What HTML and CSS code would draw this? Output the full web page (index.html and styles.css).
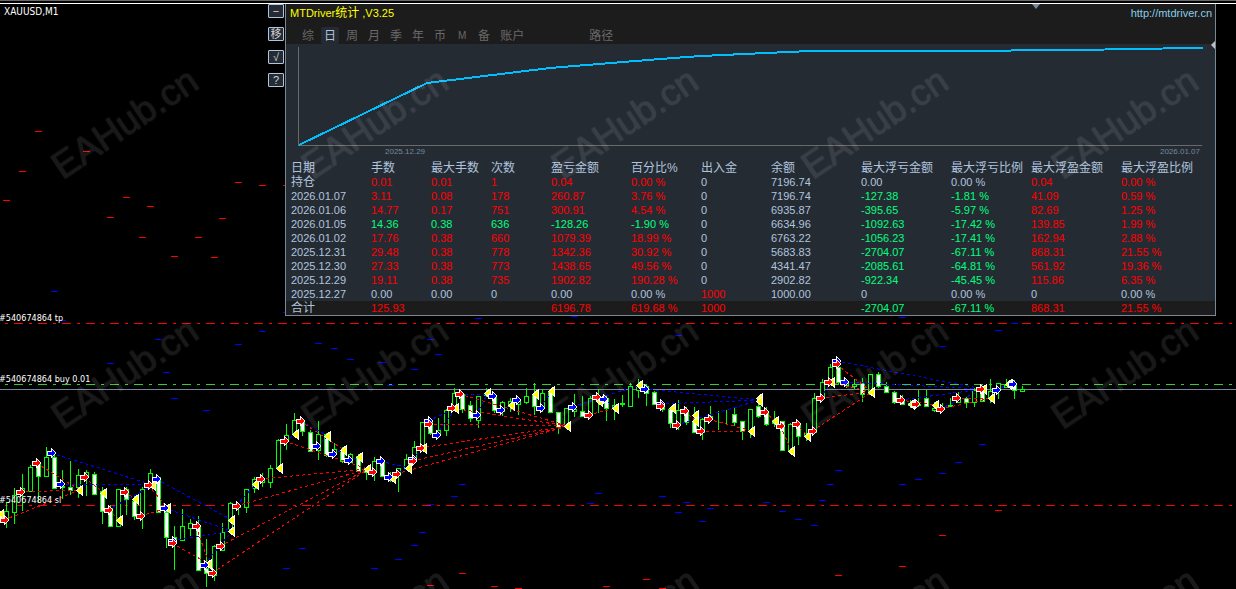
FILE: index.html
```html
<!DOCTYPE html>
<html lang="zh">
<head>
<meta charset="UTF-8">
<meta name="viewport" content="width=device-width, initial-scale=1.0">
<title>XAUUSD,M1</title>
<link rel="stylesheet" href="styles.css">
</head>
<body>

<!-- K线图 -->
<svg id="price-chart" class="price-chart"></svg>

<div class="top-line"></div>

<div class="terminal">
  <div class="side">
    <span class="symbol">XAUUSD,M1</span>
    <div class="tools">
      <button>−</button>
      <button>移</button>
      <button>√</button>
      <button>?</button>
    </div>
  </div>

  <div class="panel">
    <div class="panel-header">
      <div class="title-row">
        <span class="title">MTDriver<span class="cn">统计</span> ,V3.25</span>
        <a href="#">http://mtdriver.cn</a>
      </div>
      <nav class="tabs">
        <button>综</button>
        <button class="active">日</button>
        <button>周</button>
        <button>月</button>
        <button>季</button>
        <button>年</button>
        <button>币</button>
        <button class="latin">M</button>
        <button>备</button>
        <button>账户</button>
        <button class="path">路径</button>
      </nav>
    </div>

    <!-- 资金曲线 -->
    <figure class="equity">
      <svg viewBox="0 0 929 103" preserveAspectRatio="none">
        <path class="axis" d="M12.5 3V101.500H916"/>
        <polyline class="curve" points="13,101 141,39 264,24 374,15 415,12 524,7 650,7 800,6 838,5 917,4"/>
      </svg>
      <figcaption><span>2025.12.29</span><span>2026.01.07</span></figcaption>
    </figure>

    <table class="stats">
      <thead>
        <tr><th class="w-date">日期</th><th class="w-s">手数</th><th class="w-s">最大手数</th><th class="w-s">次数</th><th class="w-l">盈亏金额</th><th class="w-m">百分比%</th><th class="w-m">出入金</th><th class="w-xl">余额</th><th class="w-xl">最大浮亏金额</th><th class="w-l">最大浮亏比例</th><th class="w-xl">最大浮盈金额</th><th>最大浮盈比例</th></tr>
      </thead>
      <tbody>
        <tr><td class="cn">持仓</td><td class="up">0.01</td><td class="up">0.01</td><td class="up">1</td><td class="up">0.04</td><td class="up">0.00 %</td><td>0</td><td>7196.74</td><td>0.00</td><td>0.00 %</td><td class="up">0.04</td><td class="up">0.00 %</td></tr>
        <tr><td>2026.01.07</td><td class="up">3.11</td><td class="up">0.08</td><td class="up">178</td><td class="up">260.87</td><td class="up">3.76 %</td><td>0</td><td>7196.74</td><td class="down">-127.38</td><td class="down">-1.81 %</td><td class="up">41.09</td><td class="up">0.59 %</td></tr>
        <tr><td>2026.01.06</td><td class="up">14.77</td><td class="up">0.17</td><td class="up">751</td><td class="up">300.91</td><td class="up">4.54 %</td><td>0</td><td>6935.87</td><td class="down">-395.65</td><td class="down">-5.97 %</td><td class="up">82.69</td><td class="up">1.25 %</td></tr>
        <tr><td>2026.01.05</td><td class="down">14.36</td><td class="down">0.38</td><td class="down">636</td><td class="down">-128.26</td><td class="down">-1.90 %</td><td>0</td><td>6634.96</td><td class="down">-1092.63</td><td class="down">-17.42 %</td><td class="up">139.85</td><td class="up">1.99 %</td></tr>
        <tr><td>2026.01.02</td><td class="up">17.76</td><td class="up">0.38</td><td class="up">660</td><td class="up">1079.39</td><td class="up">18.99 %</td><td>0</td><td>6763.22</td><td class="down">-1056.23</td><td class="down">-17.41 %</td><td class="up">162.94</td><td class="up">2.88 %</td></tr>
        <tr><td>2025.12.31</td><td class="up">29.48</td><td class="up">0.38</td><td class="up">778</td><td class="up">1342.36</td><td class="up">30.92 %</td><td>0</td><td>5683.83</td><td class="down">-2704.07</td><td class="down">-67.11 %</td><td class="up">868.31</td><td class="up">21.55 %</td></tr>
        <tr><td>2025.12.30</td><td class="up">27.33</td><td class="up">0.38</td><td class="up">773</td><td class="up">1438.65</td><td class="up">49.56 %</td><td>0</td><td>4341.47</td><td class="down">-2085.61</td><td class="down">-64.81 %</td><td class="up">561.92</td><td class="up">19.36 %</td></tr>
        <tr><td>2025.12.29</td><td class="up">19.11</td><td class="up">0.38</td><td class="up">735</td><td class="up">1902.82</td><td class="up">190.28 %</td><td>0</td><td>2902.82</td><td class="down">-922.34</td><td class="down">-45.45 %</td><td class="up">115.86</td><td class="up">6.35 %</td></tr>
        <tr><td>2025.12.27</td><td>0.00</td><td>0.00</td><td>0</td><td>0.00</td><td>0.00 %</td><td class="up">1000</td><td>1000.00</td><td>0</td><td>0.00 %</td><td>0</td><td>0.00 %</td></tr>
      </tbody>
      <tfoot>
        <tr><td class="cn">合计</td><td class="up">125.93</td><td></td><td></td><td class="up">6196.78</td><td class="up">619.68 %</td><td class="up">1000</td><td></td><td class="down">-2704.07</td><td class="down">-67.11 %</td><td class="up">868.31</td><td class="up">21.55 %</td></tr>
      </tfoot>
    </table>
    <i class="mark-top"></i>
    <i class="mark-right"></i>
  </div>
</div>

<svg id="watermark" class="watermark"></svg>

<script src="chart.js"></script>
</body>
</html>
```

FILE: styles.css
```css
body {
  margin: 0;
  min-height: 100vh;
  position: relative;
  overflow: hidden;
  background: #000;
  color: #b0c4de;
  font-family: "Liberation Sans", "Noto Sans CJK SC", sans-serif;
  font-size: 11px;
}

button {
  margin: 0;
  padding: 0;
  border: none;
  font-family: inherit;
  cursor: pointer;
}

.price-chart,
.watermark {
  position: absolute;
  top: 0;
  left: 0;
  width: 100%;
  height: 100%;
}

.price-chart {
  shape-rendering: crispEdges;
}

.watermark {
  pointer-events: none;
}

.watermark text {
  font-size: 37px;
  text-anchor: middle;
  fill: #fff;
  stroke: #fff;
  stroke-width: 1px;
  stroke-linejoin: round;
}

.top-line {
  position: relative;
  height: 2px;
  border-top: 1px solid #696969;
  border-bottom: 1px solid #fff;
}

/* K线 */
.candle {
  fill: #000;
  stroke: #0f0;
}

.candle.fall {
  fill: #fff;
}

.wick {
  fill: #0f0;
}

.level {
  stroke-dasharray: 3 6 9 6;
}

.trade {
  stroke-dasharray: 3 3;
}

.red { stroke: #f00; }
.blue { stroke: #00f; }
.green { stroke: #32cd32; }
.slate { stroke: #778899; }

.arrow {
  stroke: #fff;
}

.arrow.r { fill: #f00; }
.arrow.b { fill: #00f; }
.arrow.y { fill: #ff0; }

.order-label {
  fill: #fff;
  font-family: "DejaVu Sans Condensed", "DejaVu Sans", sans-serif;
  font-size: 9px;
}

/* 布局 */
.terminal {
  position: relative;
  display: flex;
  align-items: flex-start;
  margin-right: 20px;
}

.side {
  display: flex;
  justify-content: space-between;
  flex: 0 0 285px;
}

.symbol {
  padding: 1px 4px;
  color: #fff;
  font-family: "DejaVu Sans Condensed", "DejaVu Sans", sans-serif;
  font-size: 10px;
  line-height: 14px;
}

.tools {
  display: flex;
  flex-direction: column;
  gap: 9px;
  margin-right: 1px;
}

.tools button {
  width: 16px;
  height: 14px;
  border: 1px solid #b0c4de;
  border-radius: 1px;
  background: #252b33;
  color: #d3d3d3;
  font-size: 11px;
  line-height: 12px;
}

.panel {
  position: relative;
  flex: 1;
  border: 1px solid #778899;
  border-top: none;
  background: #252b33;
}

.panel-header {
  height: 40px;
  background: #1c1c1c;
}

.title-row {
  display: flex;
  justify-content: space-between;
  height: 23px;
  padding: 0 3px 0 4px;
  line-height: 19px;
}

.title {
  color: #ff0;
}

.title-row a {
  color: #87ceeb;
  text-decoration: none;
}

.cn {
  font-size: 12px;
}

.tabs {
  display: flex;
  gap: 4px;
  padding-left: 13px;
}

.tabs button {
  min-width: 18px;
  height: 17px;
  padding: 0 3px;
  border-radius: 2px;
  background: none;
  color: #696969;
  font-size: 12px;
  line-height: 18px;
}

.tabs .active {
  background: #252b33;
  color: #b0c4de;
}

.tabs .latin {
  font-size: 10px;
}

.tabs .path {
  margin-left: 55px;
}

/* 资金曲线 */
.equity {
  margin: 0;
}

.equity svg {
  display: block;
  width: 100%;
  height: 103px;
  shape-rendering: crispEdges;
}

.axis {
  fill: none;
  stroke: #696969;
}

.curve {
  fill: none;
  stroke: #00bfff;
  stroke-width: 2px;
}

.equity figcaption {
  display: flex;
  justify-content: space-between;
  height: 14px;
  padding: 0 15px 0 99px;
  color: #778899;
  font-size: 8px;
  line-height: 10px;
}

/* 统计表 */
.stats {
  width: 100%;
  table-layout: fixed;
  border-collapse: collapse;
}

.stats th,
.stats td {
  height: 14px;
  padding: 0;
  line-height: 14px;
  text-align: left;
  white-space: nowrap;
}

.stats th {
  font-size: 12px;
  font-weight: normal;
}

.stats th:first-child,
.stats td:first-child {
  padding-left: 5px;
}

.stats tfoot {
  background: #1c1c1c;
}

.w-date { width: 80px; }
.w-s { width: 60px; }
.w-m { width: 70px; }
.w-l { width: 80px; }
.w-xl { width: 90px; }

.up { color: #f00; }
.down { color: #00ff7f; }

.mark-top,
.mark-right {
  position: absolute;
  border: 4px solid transparent;
}

.mark-top {
  top: 0;
  right: 175px;
  border-top: 5px solid #778899;
  border-bottom: none;
}

.mark-right {
  top: 37px;
  right: 0;
  border-right-color: #c0c0c0;
  border-left: none;
}
```

FILE: chart.js
```js
const NS = 'http://www.w3.org/2000/svg';
const chart = document.getElementById('price-chart');
const STEP = 8;
const FIRST_X = 6;

function add(parent, tag, attrs, text) {
  const el = document.createElementNS(NS, tag);
  for (const key in attrs) el.setAttribute(key, attrs[key]);
  if (text) el.textContent = text;
  parent.appendChild(el);
  return el;
}

// high, low, body top, body bottom, falling
const candles = [
  [502,528,511,520,0],[488,524,495,512,0],[474,511,488,492,0],[465,492,467,491,0],[460,502,462,476,1],
  [447,477,457,476,0],[455,488,457,488,1],[470,499,486,487,0],[461,495,487,490,1],[469,498,475,487,0],
  [470,496,472,475,0],[472,495,474,494,1],[487,524,491,511,1],[505,527,508,526,1],[489,527,489,526,0],
  [487,515,489,499,1],[496,520,501,516,1],[487,529,489,516,0],[469,487,473,486,0],[476,513,477,512,1],
  [508,548,512,537,1],[526,570,537,540,1],[509,540,526,540,0],[519,536,523,528,0],[516,570,525,570,1],
  [539,587,568,573,1],[545,581,546,575,0],[523,551,532,550,0],[502,530,503,529,0],[503,515,505,507,0],
  [489,513,489,507,0],[477,493,479,488,0],[473,487,479,482,0],[465,488,468,482,0],[439,469,440,468,0],
  [424,450,435,440,0],[413,436,420,434,0],[418,436,420,431,1],[430,451,432,451,1],[421,460,434,450,0],
  [433,457,434,455,1],[443,457,449,453,0],[447,463,450,461,1],[453,463,454,462,0],[454,471,456,471,1],
  [467,480,468,472,1],[457,481,461,471,0],[460,477,461,476,1],[472,482,475,477,1],[468,492,468,475,0],
  [454,469,459,469,0],[441,458,447,457,0],[422,450,422,447,0],[419,435,422,433,1],[418,435,430,434,0],
  [409,436,410,430,0],[388,410,393,408,0],[392,413,394,409,1],[401,422,405,418,1],[396,428,396,420,0],
  [388,397,393,395,0],[393,413,395,410,1],[401,416,402,411,0],[398,412,401,406,0],[397,415,400,404,0],
  [388,404,396,402,0],[383,415,394,406,1],[389,412,393,407,0],[391,413,392,412,1],[412,434,412,427,1],
  [408,428,408,426,0],[394,417,409,411,0],[396,417,411,416,1],[396,416,398,415,0],[389,413,396,399,1],
  [395,421,398,408,1],[399,420,405,408,0],[395,407,403,404,0],[383,407,386,406,0],[379,398,386,390,0],
  [384,406,386,393,1],[391,405,392,404,1],[401,412,404,409,1],[407,428,409,423,1],[400,430,410,425,0],
  [407,425,410,422,1],[407,432,421,432,1],[418,440,419,432,0],[406,421,416,419,0],[411,430,415,415,0],
  [410,424,415,415,0],[407,426,414,422,1],[421,440,421,431,1],[409,438,409,431,0],[402,418,406,416,1],
  [407,426,411,424,1],[411,427,420,423,0],[421,451,421,450,1],[423,454,424,451,0],[422,445,424,436,1],
  [423,441,433,436,0],[393,432,398,432,0],[379,400,382,398,0],[364,382,367,382,0],[362,384,367,382,1],
  [380,388,383,385,0],[379,389,384,386,0],[378,402,383,394,1],[374,395,374,394,0],[372,388,374,386,1],
  [382,393,386,392,1],[391,404,392,402,1],[395,405,400,404,1],[400,408,403,405,0],[390,407,404,405,0],
  [390,407,398,406,1],[402,412,408,410,0],[403,412,407,409,0],[398,407,405,406,0],[392,403,398,402,0],
  [397,408,398,402,1],[388,407,390,402,0],[388,402,390,401,1],[379,403,391,397,0],[383,399,383,390,0],
  [379,388,385,387,0],[380,399,385,390,1],[386,391,389,391,0]
];

// short dashes above and below price
const redTicks = [
  [38,131],[86,151],[22,171],[6,200],[126,197],[150,206],[110,217],[142,237],[174,256],[198,237],[214,257],
  [222,218],[238,182],[262,185],[286,185],[462,573],[430,585],[494,586],[518,588],[606,586],[646,579],
  [662,588],[838,575],[998,510],[942,535],[902,566]
];
const blueTicks = [
  [54,291],[62,320],[158,339],[110,363],[166,372],[238,344],[174,398],[206,410],[262,331],[318,343],[334,348],
  [350,359],[382,362],[414,369],[430,339],[438,354],[478,318],[390,385],[286,312],[462,484],[454,496],
  [430,504],[422,532],[414,545],[302,548],[286,568],[398,559],[374,568],[574,316],[678,335],[598,493],
  [590,503],[662,496],[686,502],[678,512],[702,521],[710,508],[766,502],[782,511],[798,519],[814,525],
  [838,470],[830,484],[822,500],[902,317],[942,346],[998,330],[1014,323],[982,444],[958,462],[942,473],
  [918,479],[902,484]
];

// open x, y -> close x, y
const redTrades = [
  [20,492,80,490],[4,520,80,490],[36,463,80,490],[84,477,104,493],[108,510,120,520],[124,492,136,499],
  [140,516,168,508],[148,485,168,508],[172,543,209,564],[196,526,209,564],[212,573,368,469],
  [220,546,368,469],[236,506,368,469],[260,479,368,469],[284,441,368,469],[300,421,344,450],
  [396,474,568,426],[412,461,568,426],[420,448,568,426],[428,424,568,426],[451,408,568,426],
  [459,394,568,426],[588,415,616,408],[684,411,696,421],[700,431,752,431],[708,419,752,431],
  [764,412,776,421],[780,426,792,451],[796,424,808,436],[812,431,872,392],[820,398,872,392],
  [828,382,872,392],[836,364,872,392],[900,400,936,405],[940,409,992,398],[956,398,992,398]
];
const blueTrades = [
  [51,453,153,485],[60,484,153,485],[108,510,153,485],[156,479,232,520],[164,508,232,531],
  [172,541,232,531],[204,565,232,531],[236,506,256,484],[284,441,296,434],[300,421,328,436],
  [316,446,328,436],[332,454,344,450],[348,460,360,457],[380,461,409,468],[388,477,409,468],
  [412,459,424,448],[428,421,456,408],[436,435,456,408],[459,394,488,394],[476,415,488,393],
  [500,410,512,405],[540,408,552,391],[572,407,640,385],[603,399,616,408],[644,389,760,400],
  [660,404,760,400],[676,425,760,400],[820,398,832,382],[836,361,984,389],[844,382,984,389],
  [900,400,984,389],[940,409,984,389],[996,390,1009,384]
];

const arrows = {
  y: [
    [1,514],[80,490],[104,493],[120,520],[136,499],[153,485],[168,508],[209,564],[232,520],[232,531],
    [256,484],[280,468],[296,434],[328,436],[344,450],[360,457],[368,469],[393,478],[409,468],[424,448],
    [456,408],[488,393],[512,405],[536,394],[552,391],[568,426],[600,401],[616,408],[640,385],[673,408],
    [696,415],[696,421],[752,431],[760,398],[760,401],[776,421],[792,451],[808,436],[832,382],[872,392],
    [912,404],[936,405],[984,389],[992,398],[1009,384]
  ],
  b: [
    [51,453],[60,484],[156,479],[164,508],[172,541],[204,565],[316,446],[332,454],[348,460],[380,461],
    [388,477],[412,459],[428,421],[436,435],[476,415],[492,396],[500,410],[516,400],[540,408],[572,407],
    [603,399],[644,389],[660,404],[836,361],[844,382],[996,390],[1012,384]
  ],
  r: [
    [4,520],[20,492],[36,463],[84,477],[108,510],[124,492],[140,516],[148,485],[172,543],[196,526],
    [212,573],[220,546],[236,506],[260,479],[284,441],[300,421],[372,472],[396,474],[412,461],[420,448],
    [428,424],[451,408],[459,394],[588,415],[596,397],[660,406],[676,425],[684,411],[700,431],[708,419],
    [764,412],[780,426],[796,424],[812,431],[820,398],[828,382],[836,364],[900,400],[915,404],[940,409],
    [956,398],[980,389]
  ]
};

function ticks(list, cls) {
  list.forEach(([x, y]) => {
    add(chart, 'path', { class: cls, d: `M${x - 3} ${y + 0.5}h7` });
  });
}

function trades(list, cls) {
  list.forEach(([x1, y1, x2, y2]) => {
    add(chart, 'line', { class: 'trade ' + cls, x1, y1, x2, y2 });
  });
}

// price levels
add(chart, 'path', { class: 'level red', d: 'M5 323.5H1232' });
add(chart, 'path', { class: 'level green', d: 'M5 384.5H1232' });
add(chart, 'path', { class: 'level red', d: 'M5 505.5H1232' });
add(chart, 'line', { class: 'slate', x1: 0, y1: 389.5, x2: '100%', y2: 389.5 });

candles.forEach(([high, low, top, bottom, fall], i) => {
  const x = FIRST_X + i * STEP;
  add(chart, 'rect', { class: 'wick', x, y: high, width: 1, height: low - high });
  add(chart, 'rect', {
    class: fall ? 'candle fall' : 'candle',
    x: x - 1.5, y: top + 0.5, width: 4, height: bottom - top
  });
});

ticks(redTicks, 'red');
ticks(blueTicks, 'blue');
trades(blueTrades, 'blue');
trades(redTrades, 'red');

const RIGHT = 'M-4-2h4v-3l5 5l-5 5v-3h-4z';
const LEFT = 'M-3.500 .5l6-5v10z';
['y', 'b', 'r'].forEach(kind => {
  arrows[kind].forEach(([x, y]) => {
    add(chart, 'path', {
      class: 'arrow ' + kind,
      d: kind === 'y' ? LEFT : RIGHT,
      transform: `translate(${x} ${y})`
    });
  });
});

// order labels
add(chart, 'text', { class: 'order-label', x: -1, y: 321 }, '#540674864 tp');
add(chart, 'text', { class: 'order-label', x: -1, y: 382 }, '#540674864 buy 0.01');
add(chart, 'text', { class: 'order-label', x: -1, y: 503 }, '#540674864 sl');

const mark = add(document.getElementById('watermark'), 'g', { opacity: 0.1 });
for (let y = 122; y < 800; y += 250) {
  for (let x = 124; x < 1300; x += 250) {
    add(mark, 'text', { transform: `translate(${x} ${y}) rotate(-34)`, y: 14 }, 'EAHub.cn');
  }
}
```
